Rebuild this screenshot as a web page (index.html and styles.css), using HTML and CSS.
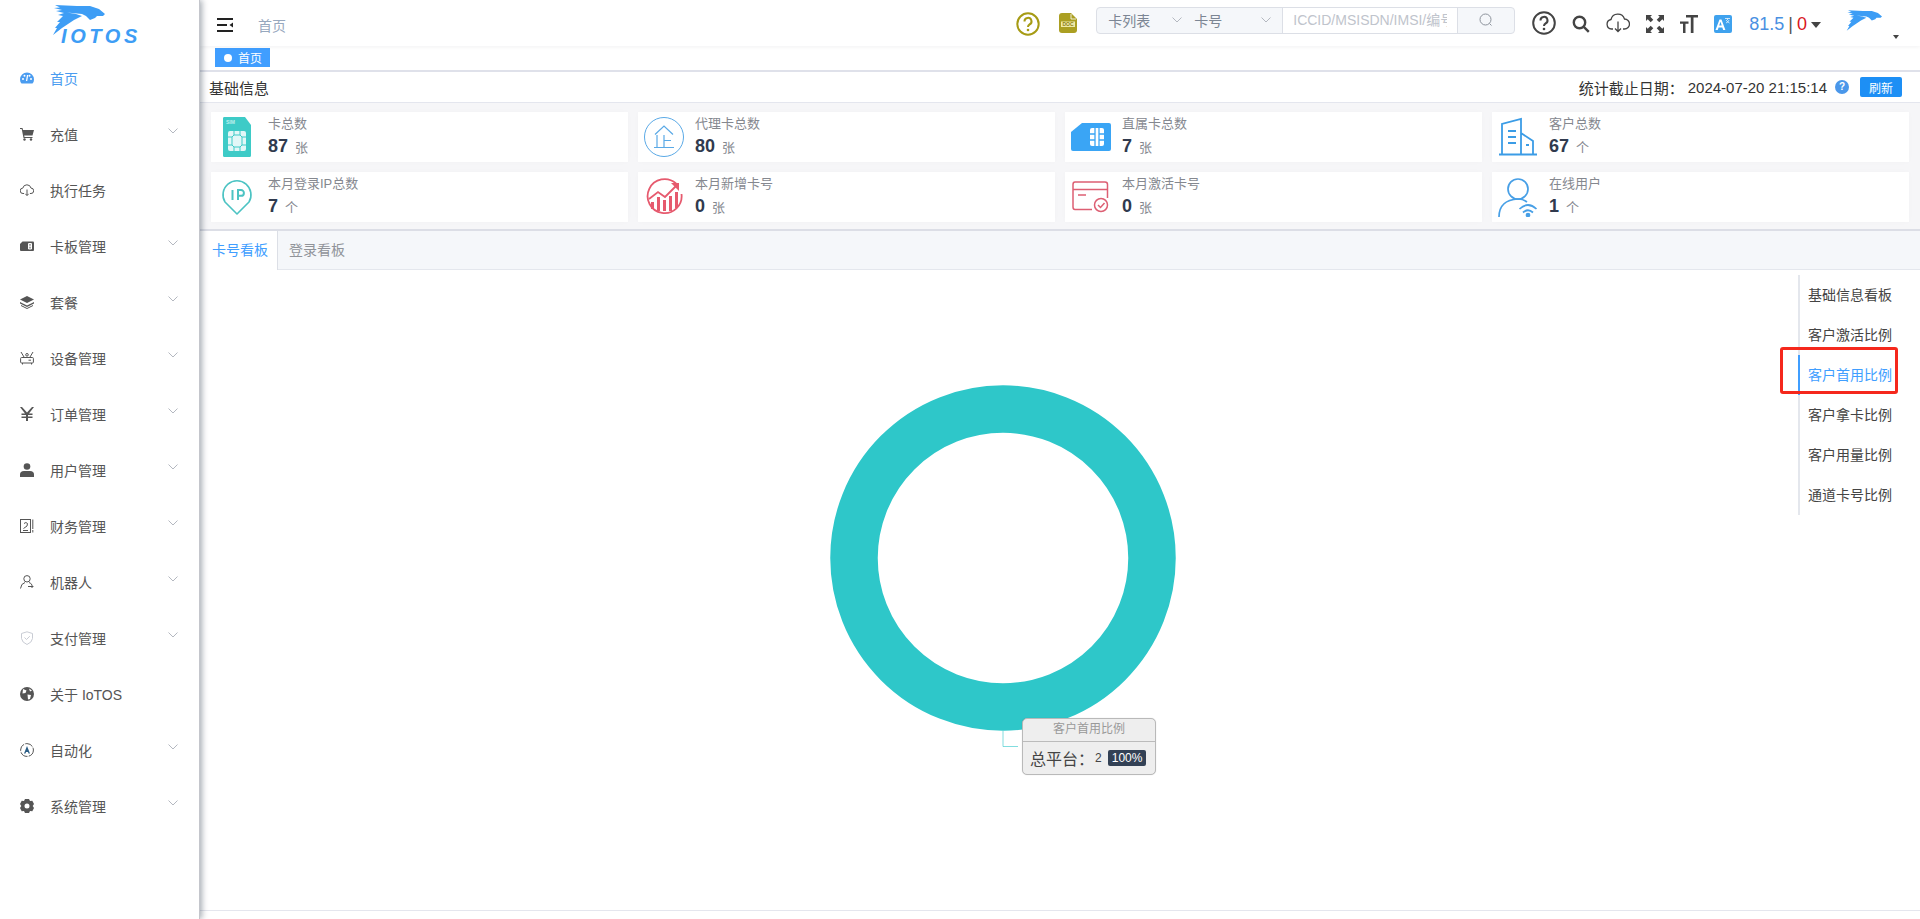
FILE: index.html
```html
<!DOCTYPE html>
<html lang="zh-CN">
<head>
  <meta charset="UTF-8">
  <title>IoTOS 首页</title>
  <link rel="stylesheet" href="styles.css">
</head>
<body>
<div class="app">

  <aside class="sidebar">
    <div class="logo">
      <svg class="logo-bird" viewBox="0 0 53 30"><path d="M3 0L25 1L38 1L47 4L53 9L51 11L45 11L43 13L38 15L34 11L30 9L15 7.500L24 9L30 11L22 15L16 19L10 23L1 30L5 23L3 23L8 17L5 17L11 11L6 10L12 8L4 6L10 5L2 3L8 2.500Z"/></svg>
      <div class="logo-text">IOTOS</div>
    </div>
    <nav class="menu">
      <a class="menu-item active">
        <svg class="menu-icon" viewBox="0 0 14 14"><path d="M7 1.5A7 7 0 0 0 0 8.500Q0 11 1.500 12.500H12.500Q14 11 14 8.500A7 7 0 0 0 7 1.500Z"/><circle cx="3" cy="8" r="1" fill="#fff"/><circle cx="4.500" cy="4.800" r="1" fill="#fff"/><circle cx="9.500" cy="4.800" r="1" fill="#fff"/><circle cx="11" cy="8" r="1" fill="#fff"/><path d="M7.600 4L6.600 10" stroke="#fff" stroke-width="1.300"/></svg>
        <span>首页</span>
      </a>
      <a class="menu-item">
        <svg class="menu-icon" viewBox="0 0 14 14"><path d="M0 1H2.500L3 3H14L12.500 8.500H4.200L4.500 10H12.500V11H3.500L1.700 2H0Z"/><circle cx="4.500" cy="12.500" r="1.200"/><circle cx="11" cy="12.500" r="1.200"/></svg>
        <span>充值</span>
        <svg class="chevron" viewBox="0 0 10 6"><path d="M.5.500L5 5L9.500.500"/></svg>
      </a>
      <a class="menu-item">
        <svg class="menu-icon line" viewBox="0 0 14 14"><path d="M4 10.500H3A2.700 2.700 0 0 1 2.800 5.100A4.200 4.200 0 0 1 11 5.100A2.700 2.700 0 0 1 11 10.500H10M7 6.500V12.500M5.300 10.800L7 12.500L8.700 10.800"/></svg>
        <span>执行任务</span>
      </a>
      <a class="menu-item">
        <svg class="menu-icon" viewBox="0 0 14 14"><path d="M2.500 2.500H13A1 1 0 0 1 14 3.500V11A1 1 0 0 1 13 12H1A1 1 0 0 1 0 11V5Z"/><path d="M8.500 4.500H11.500V10H8.500ZM10 4.500V10M8.500 7.200H11.500" stroke="#fff" fill="none"/></svg>
        <span>卡板管理</span>
        <svg class="chevron" viewBox="0 0 10 6"><path d="M.5.500L5 5L9.500.500"/></svg>
      </a>
      <a class="menu-item">
        <svg class="menu-icon" viewBox="0 0 14 14"><path d="M7 1L14 4.500L7 8L0 4.500Z"/><path d="M0 7L7 10.500L14 7V8.500L7 12L0 8.500Z"/><path d="M1 10L7 13L13 10V11L7 14L1 11Z"/></svg>
        <span>套餐</span>
        <svg class="chevron" viewBox="0 0 10 6"><path d="M.5.500L5 5L9.500.500"/></svg>
      </a>
      <a class="menu-item">
        <svg class="menu-icon line" viewBox="0 0 14 14"><path d="M1 1L4 6M13 1L10 6"/><circle cx="7" cy="3.800" r="1.300"/><rect x=".6" y="6.500" width="12.800" height="5.500" rx="1"/><path d="M2.500 12V13.500M11.500 12V13.500M8.500 9.200H11"/></svg>
        <span>设备管理</span>
        <svg class="chevron" viewBox="0 0 10 6"><path d="M.5.500L5 5L9.500.500"/></svg>
      </a>
      <a class="menu-item">
        <svg class="menu-icon" viewBox="0 0 14 14"><path d="M0 0H2L7 5.500L12 0H14L9 6.500H12.500V8H8V9.500H12.500V11H8V14H6V11H1.500V9.500H6V8H1.500V6.500H5Z"/></svg>
        <span>订单管理</span>
        <svg class="chevron" viewBox="0 0 10 6"><path d="M.5.500L5 5L9.500.500"/></svg>
      </a>
      <a class="menu-item">
        <svg class="menu-icon" viewBox="0 0 14 14"><circle cx="7" cy="3.500" r="3.300"/><path d="M0 14V11.500Q0 8 4 8H10Q14 8 14 11.500V14Z"/></svg>
        <span>用户管理</span>
        <svg class="chevron" viewBox="0 0 10 6"><path d="M.5.500L5 5L9.500.500"/></svg>
      </a>
      <a class="menu-item">
        <svg class="menu-icon line" viewBox="0 0 14 14"><rect x=".5" y=".5" width="10" height="13"/><path d="M3.500 9.500Q8.500 7 7.500 4.500Q6 2.500 4 4.500M3 11.500H8M12.800 .5V10M12.800 11V13.500" /></svg>
        <span>财务管理</span>
        <svg class="chevron" viewBox="0 0 10 6"><path d="M.5.500L5 5L9.500.500"/></svg>
      </a>
      <a class="menu-item">
        <svg class="menu-icon line" viewBox="0 0 14 14"><circle cx="7" cy="3.800" r="3.200"/><path d="M.5 13.500Q1 8.500 5 7.500M9 7.500Q11 8 12 10M8 11.500H13M11.500 10L13 11.500L11.500 13"/></svg>
        <span>机器人</span>
        <svg class="chevron" viewBox="0 0 10 6"><path d="M.5.500L5 5L9.500.500"/></svg>
      </a>
      <a class="menu-item">
        <svg class="menu-icon line pale" viewBox="0 0 14 14"><path d="M7 .8L12.500 2.500V7.500Q12 11.500 7 13.500Q2 11.500 1.500 7.500V2.500ZM4.500 6.500L6.500 8.500L9.800 5.200"/></svg>
        <span>支付管理</span>
        <svg class="chevron" viewBox="0 0 10 6"><path d="M.5.500L5 5L9.500.500"/></svg>
      </a>
      <a class="menu-item">
        <svg class="menu-icon" viewBox="0 0 14 14"><circle cx="7" cy="7" r="7"/><path d="M3 2L6.500 3.500L5.500 6L2.500 6.500ZM7.500 7.500L11 8L10 12L8 12.500ZM9 1.500L12 3.500L10 4.500Z" fill="#fff"/></svg>
        <span>关于 IoTOS</span>
      </a>
      <a class="menu-item">
        <svg class="menu-icon line" viewBox="0 0 14 14"><circle cx="7" cy="7" r="6.400" stroke-dasharray="8 1.200"/><path class="auto-a" d="M7 3L10 10.500H8.500L8 9H6L5.500 10.500H4Z"/></svg>
        <span>自动化</span>
        <svg class="chevron" viewBox="0 0 10 6"><path d="M.5.500L5 5L9.500.500"/></svg>
      </a>
      <a class="menu-item">
        <svg class="menu-icon" viewBox="0 0 14 14"><path fill-rule="evenodd" d="M5 0H9L10 2L12.300 1.800L14 5L12.700 7L14 9L12.300 12.200L10 12L9 14H5L4 12L1.700 12.200L0 9L1.300 7L0 5L1.700 1.800L4 2ZM7 4.500A2.500 2.500 0 1 0 7 9.500A2.500 2.500 0 1 0 7 4.500Z"/></svg>
        <span>系统管理</span>
        <svg class="chevron" viewBox="0 0 10 6"><path d="M.5.500L5 5L9.500.500"/></svg>
      </a>
    </nav>
  </aside>

  <main class="main">

    <header class="topbar">
      <svg class="burger" viewBox="0 0 16 14"><path d="M0 0H16V2H0ZM0 6H10V8H0ZM0 12H16V14H0Z"/><path d="M16 4.500V9.500L12.500 7Z"/></svg>
      <span class="crumb">首页</span>
      <div class="topbar-right">
        <svg class="olive-help" viewBox="0 0 24 24"><circle cx="12" cy="12" r="10.700"/><path d="M8.500 9.500A3.500 3.500 0 1 1 13.500 12.500Q12 13.300 12 15"/><circle class="dot" cx="12" cy="18" r="1.300"/></svg>
        <svg class="olive-doc" viewBox="0 0 18 20"><path d="M3 0H12L18 6V17A3 3 0 0 1 15 20H3A3 3 0 0 1 0 17V3A3 3 0 0 1 3 0Z"/><path class="doc-band" d="M2 8.500H16V14H2Z"/><path class="doc-fold" d="M12 1V6H17"/><text class="doc-text" x="9" y="13" text-anchor="middle">DOC</text></svg>
        <div class="search">
          <div class="search-select first">
            <span>卡列表</span>
            <svg class="chevron" viewBox="0 0 10 6"><path d="M.5.500L5 5L9.500.500"/></svg>
          </div>
          <div class="search-select second">
            <span>卡号</span>
            <svg class="chevron" viewBox="0 0 10 6"><path d="M.5.500L5 5L9.500.500"/></svg>
          </div>
          <div class="search-input"><span>ICCID/MSISDN/IMSI/编号</span></div>
          <div class="search-btn">
            <svg viewBox="0 0 14 14"><circle cx="6.500" cy="6.500" r="5.500"/><path d="M10.500 10.500L12.500 12.500"/></svg>
          </div>
        </div>
        <svg class="tool help" viewBox="0 0 24 24"><circle cx="12" cy="12" r="10.800"/><path d="M8.500 9.500A3.500 3.500 0 1 1 13.500 12.500Q12 13.300 12 15"/><circle class="dot" cx="12" cy="18" r="1.300"/></svg>
        <svg class="tool find" viewBox="0 0 18 18"><circle cx="7.500" cy="7.500" r="5.700"/><path d="M11.800 11.800L16.800 16.800"/></svg>
        <svg class="tool cloud" viewBox="0 0 24 20"><path d="M7 16H5.500A4.800 4.800 0 0 1 5 6.500A7 7 0 0 1 18.500 6A5 5 0 0 1 18.500 16H17M12 8.500V18.500M9 15.500L12 18.500L15 15.500"/></svg>
        <svg class="tool expand" viewBox="0 0 18 18"><path d="M0 0H6L4.300 1.700L7.300 4.700L4.700 7.300L1.700 4.300L0 6ZM18 0V6L16.300 4.300L13.300 7.300L10.700 4.700L13.700 1.700L12 0ZM18 18H12L13.700 16.300L10.700 13.300L13.300 10.700L16.300 13.700L18 12ZM0 18V12L1.700 13.700L4.700 10.700L7.300 13.300L4.300 16.300L6 18Z"/></svg>
        <svg class="tool textsize" viewBox="0 0 18 18"><path d="M6 0H18V2.500H13.500V18H10.800V2.500H6ZM0 6.500H8.500V8.800H5.500V18H3V8.800H0Z"/></svg>
        <svg class="tool translate" viewBox="0 0 18 18"><rect width="18" height="18" rx="2"/><path class="t-a" d="M5.500 4.500L1.500 15H3.700L4.600 12.400H8.300L9.200 15H11.400L7.500 4.500ZM5.200 10.500L6.500 6.800L7.700 10.500Z"/><path class="t-x" d="M11 3.500H16M13.500 3.500V5M12 8Q14.500 7 15 5M12 5Q13.500 7 15.500 8"/></svg>
        <div class="balance">
          <span class="bal-blue">81.5</span>
          <span class="bal-sep">|</span>
          <span class="bal-red">0</span>
          <span class="caret big"></span>
        </div>
        <div class="avatar">
          <svg viewBox="0 0 53 30"><path d="M3 0L25 1L38 1L47 4L53 9L51 11L45 11L43 13L38 15L34 11L30 9L15 7.500L24 9L30 11L22 15L16 19L10 23L1 30L5 23L3 23L8 17L5 17L11 11L6 10L12 8L4 6L10 5L2 3L8 2.500Z"/></svg>
          <span class="caret small"></span>
        </div>
      </div>
    </header>

    <div class="tags">
      <span class="tag"><i></i>首页</span>
    </div>

    <section class="info">
      <div class="info-head">
        <span class="info-title">基础信息</span>
        <div class="info-right">
          <span class="info-label">统计截止日期：</span>
          <span class="info-date">2024-07-20 21:15:14</span>
          <span class="info-q">?</span>
          <button class="refresh">刷新</button>
        </div>
      </div>

      <div class="stats">
        <div class="stat">
          <div class="stat-icon"><svg viewBox="0 0 40 40"><path fill="#3ecbc7" d="M7 0H28L34 8V38.500A1.500 1.500 0 0 1 32.500 40H7A1.500 1.500 0 0 1 6 38.500V1.500A1.500 1.500 0 0 1 7 0Z"/><rect x="11" y="14" width="18" height="20" rx="2" fill="#fff" opacity=".85"/><path d="M11 20H15L17 18V14M29 20H25L23 18V14M11 28H15L17 30V34M29 28H25L23 30V34M15 20V28M25 20V28M17 18H23M17 30H23" stroke="#3ecbc7" fill="none"/><text x="9" y="7" class="sim-text">SIM</text></svg></div>
          <div class="stat-text"><div class="stat-name">卡总数</div><div class="stat-val"><b>87</b><span>张</span></div></div>
        </div>
        <div class="stat">
          <div class="stat-icon"><svg viewBox="0 0 40 40" fill="none" stroke="#5aa9e6"><circle cx="20" cy="20" r="19.500"/><path d="M10 30.500H30M20 18V30M20 23.500H27M13 18V30M11 17.500L20 9L29 17.500" stroke-width="1.200"/></svg></div>
          <div class="stat-text"><div class="stat-name">代理卡总数</div><div class="stat-val"><b>80</b><span>张</span></div></div>
        </div>
        <div class="stat">
          <div class="stat-icon"><svg viewBox="0 0 40 28"><path fill="#3aa5f5" d="M11 0H38A2 2 0 0 1 40 2V26A2 2 0 0 1 38 28H2A2 2 0 0 1 0 26V9Z"/><path fill="#fff" d="M19 7Q19 5 21 5H31Q33 5 33 7V21Q33 23 31 23H21Q19 23 19 21Z"/><path stroke="#3aa5f5" stroke-width="1.300" d="M24 5V23M28 5V23M19 11H24M28 11H33M19 17H24M28 17H33"/></svg></div>
          <div class="stat-text"><div class="stat-name">直属卡总数</div><div class="stat-val"><b>7</b><span>张</span></div></div>
        </div>
        <div class="stat">
          <div class="stat-icon"><svg viewBox="0 0 40 40" fill="none" stroke="#3b9ce6" stroke-width="1.800"><path d="M1 37.500H39" stroke-width="2"/><path d="M4 37V7L23 2V37M23 16L35 24V37M10 14H18M10 20H18M10 26H18M28 28H31"/></svg></div>
          <div class="stat-text"><div class="stat-name">客户总数</div><div class="stat-val"><b>67</b><span>个</span></div></div>
        </div>
        <div class="stat">
          <div class="stat-icon"><svg viewBox="0 0 40 40" fill="none" stroke="#4cc3c3" stroke-width="1.600"><path d="M20 37L8 25A14 14 0 1 1 32 25Z" stroke-linejoin="round"/><path d="M15.500 13V23M21 23V13H24A2.800 2.800 0 0 1 24 18.800H21" stroke-width="2"/></svg></div>
          <div class="stat-text"><div class="stat-name">本月登录IP总数</div><div class="stat-val"><b>7</b><span>个</span></div></div>
        </div>
        <div class="stat">
          <div class="stat-icon"><svg viewBox="0 0 40 40" fill="none" stroke="#e65a6e" stroke-width="1.800"><path d="M32 6.500A17 17 0 1 0 37.500 17"/><path d="M5 22L14 15L21 20L32 9" stroke-width="1.800"/><path fill="#e65a6e" stroke="none" d="M27 6H35V14ZM7 25H10V32H7ZM13 20H16V34H13ZM19 23H22V34H19ZM25 19H28V34H25ZM31 15H34V31H31Z"/></svg></div>
          <div class="stat-text"><div class="stat-name">本月新增卡号</div><div class="stat-val"><b>0</b><span>张</span></div></div>
        </div>
        <div class="stat">
          <div class="stat-icon"><svg viewBox="0 0 40 40" fill="none" stroke="#dd5f73" stroke-width="1.500"><path d="M21 32.500H4Q2 32.500 2 30V7.500Q2 5 4 5H34Q36.500 5 36.500 7.500V21M2 12.500H36.500M7 18H15"/><circle cx="30" cy="28" r="6.500"/><path d="M27 28L29.500 30.500L33.500 26"/></svg></div>
          <div class="stat-text"><div class="stat-name">本月激活卡号</div><div class="stat-val"><b>0</b><span>张</span></div></div>
        </div>
        <div class="stat">
          <div class="stat-icon"><svg viewBox="0 0 40 40" fill="none" stroke="#479fe6" stroke-width="1.700"><circle cx="20" cy="12" r="10"/><path d="M1 40Q1 23 20 22Q25 22 29 25"/><path d="M21.500 32Q30 24 38.500 32M25 35.500Q30 31 35 35.500"/><circle cx="30" cy="38" r="1.500" fill="#479fe6"/></svg></div>
          <div class="stat-text"><div class="stat-name">在线用户</div><div class="stat-val"><b>1</b><span>个</span></div></div>
        </div>
      </div>
    </section>

    <div class="tabs">
      <div class="tab active">卡号看板</div>
      <div class="tab">登录看板</div>
    </div>

    <section class="board">
      <div class="chart">
        <svg class="donut" viewBox="0 0 350 380">
          <circle cx="175" cy="175" r="149" fill="none" stroke="#2ec7c9" stroke-width="47.500"/>
          <path d="M175 348V363.500H190" fill="none" stroke="#2ec7c9" stroke-opacity=".6" stroke-width="1"/>
        </svg>
        <div class="chart-tip">
          <div class="tip-head">客户首用比例</div>
          <div class="tip-row"><span class="tip-name">总平台：</span><span class="tip-num">2</span><span class="tip-pct">100%</span></div>
        </div>
      </div>
      <ul class="anchor">
        <li>基础信息看板</li>
        <li>客户激活比例</li>
        <li class="current">客户首用比例<i class="mark-box"></i></li>
        <li>客户拿卡比例</li>
        <li>客户用量比例</li>
        <li>通道卡号比例</li>
      </ul>
    </section>

    <div class="foot"></div>
  </main>

</div>
</body>
</html>
```

FILE: styles.css
```css
* { box-sizing: border-box; }

html, body {
  margin: 0;
  height: 100%;
  overflow: hidden;
}

body {
  font-family: "Liberation Sans", "Noto Sans CJK SC", sans-serif;
  font-size: 14px;
  color: #333;
  background: #fff;
}

.app {
  display: flex;
  height: 100vh;
}

/* sidebar */
.sidebar {
  width: 200px;
  flex: none;
  background: #fff;
  box-shadow: 2px 0 6px rgba(0, 21, 41, 0.35);
  border-right: 1px solid #c4c6cc;
  position: relative;
  z-index: 2;
}

.logo {
  height: 50px;
  padding: 5px 0 0 52px;
}

.logo-bird {
  display: block;
  width: 53px;
  height: 30px;
  fill: #3d9df5;
}

.logo-text {
  margin: -9px 0 0 9px;
  font-size: 20px;
  line-height: 20px;
  font-weight: bold;
  font-style: italic;
  letter-spacing: 3.600px;
  color: #3d9df5;
}

.menu-item {
  display: flex;
  align-items: center;
  height: 56px;
  padding-left: 20px;
  color: #555;
  cursor: pointer;
}

.menu-icon {
  width: 14px;
  height: 14px;
  margin-right: 16px;
  flex: none;
  fill: #555;
}

.menu-icon.line {
  fill: none;
  stroke: #555;
  stroke-width: 1;
}

.menu-icon.pale {
  stroke: #c9ccd4;
}

.auto-a {
  fill: #2b5d85;
  stroke: none;
}

.menu-item.active {
  color: #4a9cf0;
}

.menu-item.active .menu-icon {
  fill: #4a9cf0;
}

.chevron {
  width: 10px;
  height: 6px;
  fill: none;
  stroke: #b4b8c0;
  stroke-width: 1;
}

.menu-item .chevron {
  margin: -6px 0 0 auto;
  margin-right: 21px;
}

/* main column */
.main {
  flex: 1;
  min-width: 0;
  display: flex;
  flex-direction: column;
}

.topbar {
  height: 46px;
  flex: none;
  display: flex;
  align-items: center;
  padding: 0 0 0 17px;
  background: #fff;
  box-shadow: 0 1px 4px rgba(0, 21, 41, 0.06);
  position: relative;
}

.burger {
  width: 16px;
  height: 14px;
  margin: 3px 25px 0 0;
  fill: #222;
}

.crumb {
  color: #97a8be;
  margin-top: 4px;
}

.topbar-right {
  margin-left: auto;
  display: flex;
  align-items: center;
}

.olive-help {
  width: 24px;
  height: 24px;
  fill: none;
  stroke: #a69b14;
  stroke-width: 2;
  margin: 1px 19px 0 0;
}

.olive-help .dot,
.help .dot {
  stroke: none;
}

.olive-help .dot {
  fill: #a69b14;
}

.olive-doc {
  width: 18px;
  height: 20px;
  fill: #ab9f22;
  margin: 0 19px 0 0;
}

.doc-band {
  fill: #efe9a8;
}

.doc-fold {
  fill: none;
  stroke: #fff;
  stroke-width: 0.8;
}

.doc-text {
  font-size: 5px;
  font-weight: bold;
  fill: #8a8010;
}

.search {
  display: flex;
  width: 419px;
  height: 27px;
  margin: -6px 17px 0 0;
  border: 1px solid #dcdfe6;
  border-radius: 4px;
  background: #f5f7fa;
  color: #7c8694;
}

.search-select {
  display: flex;
  align-items: center;
  justify-content: space-between;
}

.search-select.first {
  width: 96px;
  padding: 0 11px;
}

.search-select.second {
  width: 89px;
  padding: 0 11px 0 1px;
}

.search-input {
  width: 176px;
  padding: 0 10px;
  background: #fff;
  border-left: 1px solid #dcdfe6;
  border-right: 1px solid #dcdfe6;
  color: #c0c4cc;
  line-height: 24px;
  overflow: hidden;
  white-space: nowrap;
}

.search-input span {
  display: block;
  overflow: hidden;
}

.search-btn {
  flex: 1;
  display: flex;
  align-items: center;
  justify-content: center;
}

.search-btn svg {
  width: 14px;
  height: 14px;
  fill: none;
  stroke: #8d939c;
  stroke-width: 1;
}

.tool {
  flex: none;
}

.help {
  width: 24px;
  height: 24px;
  fill: none;
  stroke: #444;
  stroke-width: 2;
  margin-right: 16px;
}

.help .dot {
  fill: #444;
}

.find {
  width: 18px;
  height: 18px;
  fill: none;
  stroke: #444;
  stroke-width: 2.400;
  margin: 1px 16px 0 0;
}

.cloud {
  width: 24px;
  height: 20px;
  fill: none;
  stroke: #444;
  stroke-width: 1.300;
  margin: 0 16px 0 0;
}

.expand {
  width: 18px;
  height: 18px;
  fill: #444;
  margin: 1px 16px 0 0;
}

.textsize {
  width: 18px;
  height: 18px;
  fill: #444;
  margin: 1px 16px 0 0;
}

.translate {
  width: 18px;
  height: 18px;
  fill: #3fa2ee;
  margin: 1px 17px 0 0;
}

.t-a {
  fill: #fff;
  fill-rule: evenodd;
}

.t-x {
  fill: none;
  stroke: #fff;
  stroke-width: 0.7;
}

.balance {
  display: flex;
  align-items: center;
  gap: 4px;
  font-size: 18px;
  margin: 3px 25px 0 0;
}

.bal-blue {
  color: #4a90e2;
}

.bal-sep {
  color: #555;
}

.bal-red {
  color: #d9161c;
}

.caret {
  width: 0;
  height: 0;
  border-style: solid;
  border-color: #444 transparent transparent;
}

.caret.big {
  border-width: 6px 5px 0;
}

.caret.small {
  border-width: 4px 3.500px 0;
  margin: 27px 0 0 11px;
}

.avatar {
  display: flex;
  align-items: flex-start;
  height: 46px;
  padding-top: 8px;
  margin-right: 21px;
}

.avatar svg {
  width: 36px;
  height: 25px;
  fill: #3d9df5;
}

/* tag strip */
.tags {
  height: 26px;
  flex: none;
  padding: 2px 0 0 15px;
  border-bottom: 2px solid #dfe1ea;
}

.tag {
  display: inline-flex;
  align-items: center;
  height: 19px;
  width: 55px;
  padding-left: 9px;
  background: #409eff;
  color: #fff;
  font-size: 12px;
}

.tag i {
  width: 8px;
  height: 8px;
  margin-right: 6px;
  border-radius: 50%;
  background: #fff;
}

/* base info */
.info-head {
  height: 31px;
  display: flex;
  align-items: center;
  justify-content: space-between;
  padding: 0 18px 0 9px;
  border-bottom: 1px solid #e4e6ee;
  font-size: 15px;
}

.info-right {
  display: flex;
  align-items: center;
}

.info-date {
  margin-left: 4px;
}

.info-q {
  width: 14px;
  height: 14px;
  margin: 0 11px 0 8px;
  border-radius: 50%;
  background: #4a97ea;
  color: #fff;
  font-size: 10px;
  font-weight: bold;
  line-height: 14px;
  text-align: center;
}

.refresh {
  width: 42px;
  height: 20px;
  padding: 0;
  border: 0;
  border-radius: 2px;
  background: #1d8ff5;
  color: #fff;
  font-family: inherit;
  font-size: 12px;
}

.stats {
  display: grid;
  grid-template-columns: repeat(4, 417px);
  grid-auto-rows: 50px;
  gap: 10px;
  padding: 9px 11px 7px;
  background: #f6f6f8;
  border-bottom: 2px solid #dcdee6;
}

.stat {
  display: flex;
  align-items: center;
  padding-left: 6px;
  background: #fff;
  box-shadow: 0 0 6px rgba(0, 0, 0, 0.02);
}

.stat-icon {
  width: 40px;
  margin-right: 11px;
  flex: none;
}

.stat-icon svg {
  display: block;
  width: 40px;
  height: 40px;
}

.stat-icon svg[viewBox="0 0 40 28"] {
  height: 28px;
}

.sim-text {
  font-size: 5px;
  font-weight: bold;
  fill: #bff0ee;
}

.stat-text {
  min-width: 0;
  padding-top: 2px;
}

.stat-name {
  font-size: 13px;
  line-height: 18px;
  color: #85888f;
}

.stat-val {
  line-height: 26px;
  display: flex;
  align-items: baseline;
}

.stat-val b {
  font-size: 18px;
  color: #303a4e;
  margin-right: 7px;
}

.stat-val span {
  font-size: 13px;
  color: #85888f;
}

/* tabs */
.tabs {
  height: 39px;
  flex: none;
  display: flex;
  background: #f5f7fa;
  border-bottom: 1px solid #e4e7ed;
  color: #909399;
}

.tab {
  padding: 0 11px;
  line-height: 38px;
}

.tab.active {
  padding: 0 9px 0 12px;
  height: 39px;
  background: #fff;
  border-right: 1px solid #dcdfe6;
  color: #409eff;
}

/* board */
.board {
  flex: 1;
  min-height: 0;
  display: flex;
}

.chart {
  flex: 1;
  min-width: 0;
  position: relative;
  padding: 113px 0 0 8px;
}

.donut {
  display: block;
  width: 350px;
  height: 380px;
  margin: 0 auto;
}

.chart-tip {
  position: absolute;
  left: 822px;
  top: 448px;
  width: 134px;
  height: 57px;
  background: #eee;
  border: 1px solid #b9b9b9;
  border-radius: 5px;
  box-shadow: 0 0 1px rgba(0, 0, 0, 0.2);
}

.tip-head {
  height: 23px;
  line-height: 21px;
  border-bottom: 1px solid #bbb;
  font-size: 12px;
  text-align: center;
  color: #999;
}

.tip-row {
  display: flex;
  align-items: center;
  height: 31px;
  padding: 0 7px;
}

.tip-name {
  font-size: 16px;
  color: #444;
}

.tip-num {
  font-size: 12px;
  margin: 0 0 0 1px;
  color: #444;
}

.tip-pct {
  margin-left: 6px;
  padding: 0 4px;
  height: 16px;
  line-height: 16px;
  border-radius: 2px;
  background: #334155;
  color: #fff;
  font-size: 12px;
}

.anchor {
  width: 122px;
  flex: none;
  height: 240px;
  margin: 5px 0 0;
  padding: 0;
  list-style: none;
  border-left: 2px solid #e4e7ed;
}

.anchor li {
  position: relative;
  height: 40px;
  line-height: 40px;
  padding-left: 8px;
  color: #444;
}

.anchor li.current {
  color: #409eff;
  box-shadow: -2px 0 0 #409eff;
}

.mark-box {
  position: absolute;
  left: -20px;
  top: -8px;
  width: 118px;
  height: 47px;
  border: 3px solid #f5281c;
  border-radius: 3px;
}

.foot {
  height: 9px;
  flex: none;
  border-top: 1px solid #e4e6ee;
}
```
